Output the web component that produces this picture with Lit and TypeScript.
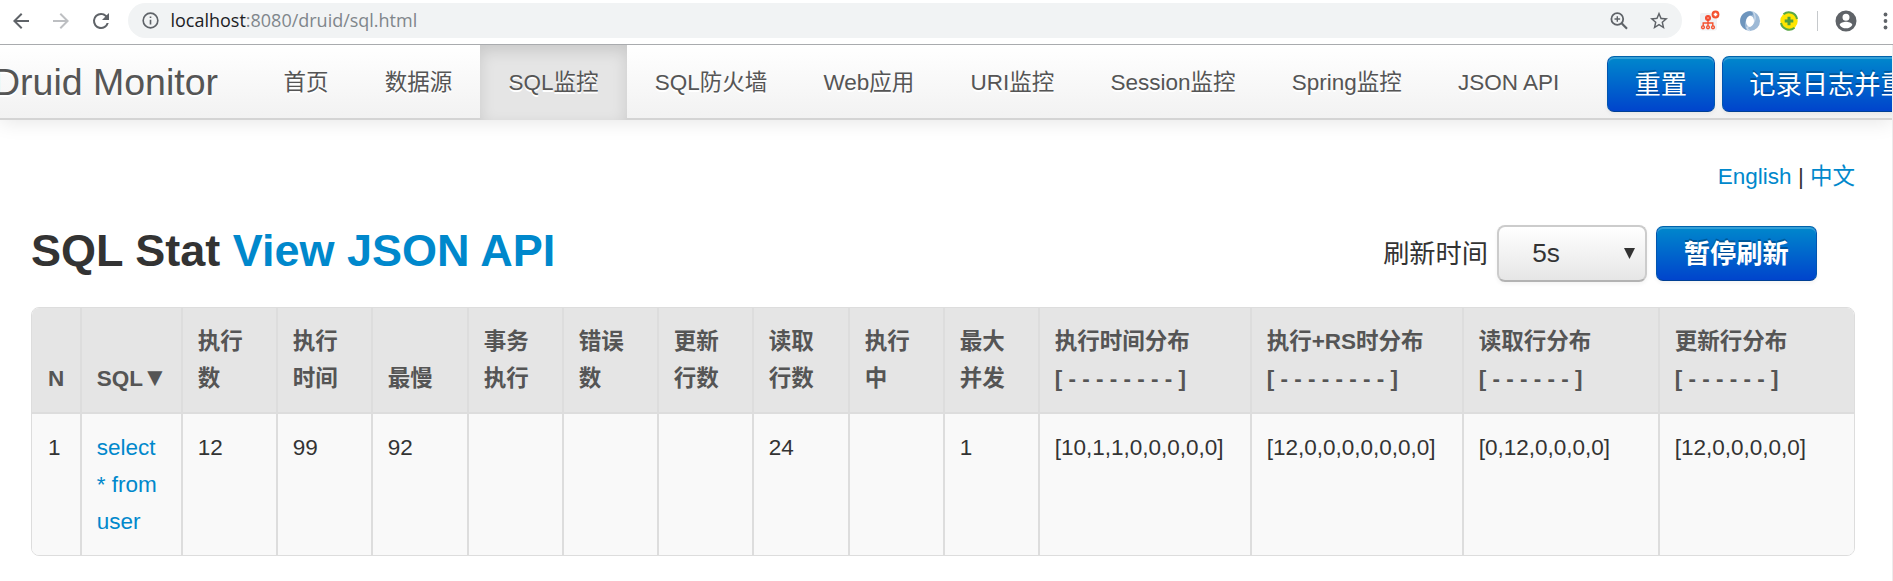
import { LitElement, html, css } from "lit";
import { customElement } from "lit/decorators.js";
import { classMap } from "lit/directives/class-map.js";

interface Column {
  title: string;
  buckets?: string;
  value: string;
}

const NAV = ["首页", "数据源", "SQL监控", "SQL防火墙", "Web应用", "URI监控", "Session监控", "Spring监控", "JSON API"];

const COLUMNS: Column[] = [
  { title: "执行数", value: "12" },
  { title: "执行时间", value: "99" },
  { title: "最慢", value: "92" },
  { title: "事务执行", value: "" },
  { title: "错误数", value: "" },
  { title: "更新行数", value: "" },
  { title: "读取行数", value: "24" },
  { title: "执行中", value: "" },
  { title: "最大并发", value: "1" },
  { title: "执行时间分布", buckets: "[ - - - - - - - - ]", value: "[10,1,1,0,0,0,0,0]" },
  { title: "执行+RS时分布", buckets: "[ - - - - - - - - ]", value: "[12,0,0,0,0,0,0,0]" },
  { title: "读取行分布", buckets: "[ - - - - - - ]", value: "[0,12,0,0,0,0]" },
  { title: "更新行分布", buckets: "[ - - - - - - ]", value: "[12,0,0,0,0,0]" },
];

@customElement("browser-bar")
export class BrowserBar extends LitElement {
  static styles = css`
    :host { display: flex; align-items: center; box-sizing: border-box; height: 45px; padding: 0 0 3px 8.500px; border-bottom: 1px solid #a9abae; background: #fff; }
    svg { display: block; flex: none; }
    .nav { display: flex; gap: 16px; flex: none; }
    .omni { display: flex; align-items: center; box-sizing: border-box; width: 1554px; height: 35px; margin-left: 15.500px; padding: 0 11px 0 11px; border-radius: 18px; background: #f1f3f4; flex: none; }
    .url { margin-left: 8.500px; padding-bottom: 1px; flex: 1; font: 18px/24px "Open Sans", "Noto Sans", sans-serif; letter-spacing: -0.010px; color: #80868b; white-space: nowrap; }
    .host { color: #202124; }
    .tools { display: flex; gap: 16px; }
    .ext { display: flex; align-items: center; margin-left: 15px; }
    .ext svg { margin-right: 16px; }
    .ext .first { margin-right: 17px; }
    .ext .second { margin-right: 15px; }
    .rule { width: 1px; height: 20px; background: #c6c9cc; margin-right: 16px; }
  `;
  render() {
    return html`
      <div class="nav">
        <svg width="24" height="24" viewBox="0 0 24 24" fill="#5f6368"><path d="M20 11H7.830l5.590-5.590L12 4l-8 8 8 8 1.410-1.410L7.830 13H20v-2z"/></svg>
        <svg width="24" height="24" viewBox="0 0 24 24" fill="#bdbfc2"><path d="M12 4l-1.410 1.410L16.170 11H4v2h12.170l-5.580 5.590L12 20l8-8z"/></svg>
        <svg width="24" height="24" viewBox="0 0 24 24" fill="#5f6368"><path d="M17.650 6.350A7.958 7.958 0 0 0 12 4a8 8 0 1 0 7.730 10h-2.080A6 6 0 1 1 12 6c1.660 0 3.140.690 4.220 1.780L13 11h7V4l-2.350 2.350z"/></svg>
      </div>
      <div class="omni">
        <svg width="23" height="23" viewBox="0 0 24 24" fill="#5f6368"><path d="M11 7h2v2h-2zm0 4h2v6h-2zm1-9a10 10 0 1 0 0 20 10 10 0 0 0 0-20zm0 18a8 8 0 1 1 0-16 8 8 0 0 1 0 16z" transform="translate(1.8 1.8) scale(.85)"/></svg>
        <div class="url"><span class="host">localhost</span>:8080/druid/sql.html</div>
        <div class="tools">
          <svg width="24" height="24" viewBox="0 0 24 24" fill="none" stroke="#5f6368" stroke-width="1.8"><circle cx="10.300" cy="10" r="5.900"/><path d="M14.600 14.300l5.400 5.400" stroke-width="2.200"/><path d="M10.300 7.200v5.600M7.500 10h5.600" stroke-width="1.400"/></svg>
          <svg width="24" height="24" viewBox="0 0 24 24" fill="#5f6368"><path d="M22 9.240l-7.190-.620L12 2 9.190 8.630 2 9.240l5.460 4.730L5.820 21 12 17.270 18.180 21l-1.630-7.030L22 9.240zM12 15.400l-3.760 2.270 1-4.280-3.320-2.880 4.380-.380L12 6.100l1.710 4.040 4.380.380-3.320 2.880 1 4.280L12 15.400z" transform="translate(1.200 1) scale(.9)"/></svg>
        </div>
      </div>
      <div class="ext">
        <svg class="first" width="24" height="24" viewBox="0 0 24 24"><rect x="3" y="4" width="17" height="17.500" rx="2" fill="#f0f1f3"/><g fill="none" stroke="#f4512f" stroke-width="1.400"><path d="M11 11v6M6.200 17v-3h9.600v3"/><circle cx="6" cy="18.300" r="1.400"/><circle cx="11" cy="18.300" r="1.400"/><circle cx="16" cy="18.300" r="1.400"/></g><circle cx="11" cy="9" r="3" fill="#f4472b"/><path d="M9.700 8l2.600 2M12.300 8l-2.600 2" stroke="#fba595" stroke-width=".7"/><circle cx="18.500" cy="5.500" r="3.900" fill="#f4512f"/><path d="M18.500 3.700v3.600M16.700 5.500h3.600" stroke="#fff" stroke-width="1.700"/></svg>
        <svg class="second" width="24" height="24" viewBox="0 0 24 24"><path d="M12 2a10 10 0 1 1 0 20 10 10 0 0 1 0-20z" fill="#9db9d6"/><path d="M12 2.200C6 2.500 2.300 6.500 2.200 12c.2 4 2.800 7.500 6.300 9-3.500-7-1-12 6.500-15.500C15 4 14 2.500 12 2.200z" fill="#6e95bd"/><path d="M15.500 3c3.500 7 1 12-6.500 15.500.5 1.800 1.500 3 3 3.300" fill="none" stroke="#c9d9ea" stroke-width="1.400"/><path d="M12 6.500c-2.500 1-4 3-4 6s1.500 5 4 5.500c2.500-1 4-3 4-6s-1.500-5-4-5.500z" fill="#fff"/></svg>
        <svg width="24" height="24" viewBox="0 0 24 24"><circle cx="12" cy="12" r="8.700" fill="#ffe500"/><path d="M6.500 5.300A8.300 8.300 0 0 1 20 10M17.500 18.700A8.300 8.300 0 0 1 4 14" fill="none" stroke="#5aa845" stroke-width="2"/><path d="M12 7.700v8.600M7.700 12h8.600" stroke="#4f9f3e" stroke-width="3"/></svg>
        <div class="rule"></div>
        <svg width="24" height="24" viewBox="0 0 24 24" fill="#5f6368"><path d="M12 1.500a10.500 10.500 0 1 0 0 21 10.500 10.500 0 0 0 0-21zm0 3.200a3.500 3.500 0 1 1 0 7 3.500 3.500 0 0 1 0-7zm0 14.600c-2.700 0-5-1.300-6.300-3.400.1-2 4.200-3.100 6.300-3.100s6.200 1.100 6.300 3.100A7.500 7.500 0 0 1 12 19.300z"/></svg>
        <svg width="24" height="24" viewBox="0 0 24 24" fill="#5f6368"><circle cx="11.500" cy="5.500" r="1.900"/><circle cx="11.500" cy="12" r="1.900"/><circle cx="11.500" cy="18.500" r="1.900"/></svg>
      </div>`;
  }
}

@customElement("druid-navbar")
export class DruidNavbar extends LitElement {
  static styles = css`
    :host { display: flex; box-sizing: border-box; height: 75px; border-bottom: 2px solid #d4d4d4; background: linear-gradient(#fff, #f2f2f2); box-shadow: 0 2px 19px rgba(0, 0, 0, 0.1); color: #555; text-shadow: 0 2px 0 #fff; white-space: nowrap; }
    .brand { margin-left: -7px; width: 262.500px; font-size: 37.500px; line-height: 75px; flex: none; }
    .items { display: flex; flex: none; height: 75px; }
    .item { padding: 0 28.100px; font-size: 22.500px; line-height: 75px; }
    .item.active { background: #e5e5e5; box-shadow: inset 0 6px 15px rgba(0, 0, 0, 0.125); }
    .actions { display: flex; gap: 7px; align-items: flex-start; padding-top: 11px; margin-left: 19.500px; }
  `;
  render() {
    return html`
      <div class="brand">Druid Monitor</div>
      <div class="items">
        ${NAV.map((n) => html`<div class=${classMap({ item: true, active: n === "SQL监控" })}>${n}</div>`)}
      </div>
      <div class="actions">
        <blue-button>重置</blue-button>
        <blue-button>记录日志并重置</blue-button>
      </div>`;
  }
}

@customElement("blue-button")
export class BlueButton extends LitElement {
  static styles = css`
    :host { display: block; flex: none; box-sizing: border-box; height: 56px; padding: 0 26.700px; border: 1px solid; border-color: #0062ab #0055b0 #003f94; border-radius: 7px; background: linear-gradient(#0088cc, #0044cc); box-shadow: inset 0 2px 0 rgba(255, 255, 255, 0.2), 0 2px 4px rgba(0, 0, 0, 0.05); color: #fff; font-size: 26.250px; line-height: 56px; text-shadow: 0 -2px 0 rgba(0, 0, 0, 0.25); white-space: nowrap; }
  `;
  render() {
    return html`<slot></slot>`;
  }
}

@customElement("stat-table")
export class StatTable extends LitElement {
  static styles = css`
    :host { display: block; box-sizing: border-box; width: 1824px; border: 1px solid #ddd; border-radius: 8px; overflow: hidden; font-size: 22.500px; line-height: 37px; }
    .row { display: grid; grid-template-columns: 48px 101px repeat(2, 95px) 96px repeat(2, 95px) 95px 96px 95px 95px 212px 212px 196px 1fr; }
    .cell { box-sizing: border-box; padding: 15px 12px 15px 14.700px; border-left: 2px solid #ddd; }
    .cell:first-child { border-left: 0; padding-left: 16px; padding-right: 0; }
    .head { background: #e5e5e5; color: #555; font-weight: 700; height: 104px; border-bottom: 2px solid #ddd; }
    .head .cell { display: flex; flex-direction: column; justify-content: flex-end; }
    .body { background: #f9f9f9; color: #333; height: 141px; }
    .sort { font-size: 26px; line-height: 20px; margin-left: -1px; }
    .link { color: #0088cc; }
    .nowrap { white-space: nowrap; }
  `;
  render() {
    return html`
      <div class="row head">
        <div class="cell">N</div>
        <div class="cell nowrap"><div>SQL<span class="sort">▼</span></div></div>
        ${COLUMNS.map((c) => html`<div class="cell"><div>${c.title}</div>${c.buckets ? html`<div class="nowrap">${c.buckets}</div>` : ""}</div>`)}
      </div>
      <div class="row body">
        <div class="cell">1</div>
        <div class="cell link">select * from user</div>
        ${COLUMNS.map((c) => html`<div class="cell nowrap">${c.value}</div>`)}
      </div>`;
  }
}

@customElement("app-root")
export class AppRoot extends LitElement {
  static styles = css`
    :host { display: block; height: 581px; overflow: hidden; background: #fff; color: #333; font-family: "Liberation Sans", "Noto Sans CJK SC", sans-serif; }
    .page { box-sizing: border-box; height: 536px; border-right: 1px solid #ececec; overflow: hidden; }
    .main { padding: 38px 37px 0 31px; }
    .lang { text-align: right; font-size: 22.500px; line-height: 37px; }
    .blue { color: #0088cc; }
    .titlebar { display: flex; align-items: center; justify-content: space-between; height: 75px; margin-top: 18px; padding-right: 38px; }
    .title { margin: 0; font-size: 45px; line-height: 75px; font-weight: 700; }
    .refresh { display: flex; align-items: center; font-size: 26.250px; padding-top: 5px; }
    .label { padding-bottom: 3px; }
    .select { display: flex; align-items: center; justify-content: space-between; box-sizing: border-box; width: 150px; height: 57px; margin: 0 9px 0 8.500px; padding: 0 10px 0 33.500px; border: 2px solid #ccc; border-bottom-color: #b3b3b3; border-radius: 8px; background: linear-gradient(#fff, #e6e6e6); box-shadow: 0 2px 4px rgba(0, 0, 0, 0.05); }
    .pause { font-weight: 700; height: 55px; line-height: 54px; padding: 0 27.200px; }
    stat-table { margin-top: 19px; }
  `;
  render() {
    return html`
      <browser-bar></browser-bar>
      <div class="page">
        <druid-navbar></druid-navbar>
        <div class="main">
          <div class="lang"><span class="blue">English</span> | <span class="blue">中文</span></div>
          <div class="titlebar">
            <h3 class="title">SQL Stat <span class="blue">View JSON API</span></h3>
            <div class="refresh">
              <span class="label">刷新时间</span>
              <div class="select"><span>5s</span><svg width="11" height="11" viewBox="0 0 11 11"><path d="M0 0h11L5.500 11z" fill="#333"/></svg></div>
              <blue-button class="pause">暂停刷新</blue-button>
            </div>
          </div>
          <stat-table></stat-table>
        </div>
      </div>`;
  }
}
